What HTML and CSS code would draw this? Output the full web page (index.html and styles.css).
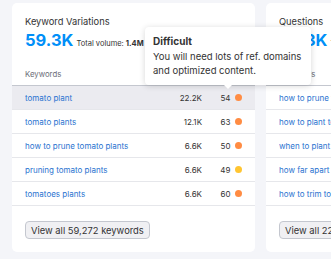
FILE: index.html
```html
<!DOCTYPE html>
<html lang="en">
<head>
    <meta charset="UTF-8">
    <title>Keyword Magic</title>
    <link rel="stylesheet" href="styles.css">
</head>
<body>
<div class="board">
    <div class="card">
        <div class="card-title">Keyword Variations</div>
        <div class="summary">
            <span class="big">59.3K</span>
            <span class="total">Total volume: <b>1.4M</b></span>
        </div>
        <div class="head">Keywords</div>
        <ul class="rows">
            <li class="row hover"><span class="kw">tomato plant</span><span class="vol">22.2K</span><span class="kd">54<i class="dot orange"></i></span></li>
            <li class="row"><span class="kw">tomato plants</span><span class="vol">12.1K</span><span class="kd">63<i class="dot orange"></i></span></li>
            <li class="row"><span class="kw">how to prune tomato plants</span><span class="vol">6.6K</span><span class="kd">50<i class="dot orange"></i></span></li>
            <li class="row"><span class="kw">pruning tomato plants</span><span class="vol">6.6K</span><span class="kd">49<i class="dot yellow"></i></span></li>
            <li class="row"><span class="kw">tomatoes plants</span><span class="vol">6.6K</span><span class="kd">60<i class="dot orange"></i></span></li>
        </ul>
        <button class="view-all">View all 59,272 keywords</button>
    </div>
    <div class="card">
        <div class="card-title">Questions</div>
        <div class="summary">
            <span class="big">22.3K</span>
            <span class="total">Total volume: <b>95.1K</b></span>
        </div>
        <div class="head">Keywords</div>
        <ul class="rows">
            <li class="row"><span class="kw">how to prune tomato plants</span><span class="vol">6.6K</span><span class="kd">50<i class="dot orange"></i></span></li>
            <li class="row"><span class="kw">how to plant tomatoes</span><span class="vol">5.4K</span><span class="kd">52<i class="dot orange"></i></span></li>
            <li class="row"><span class="kw">when to plant tomatoes</span><span class="vol">4.4K</span><span class="kd">48<i class="dot yellow"></i></span></li>
            <li class="row"><span class="kw">how far apart to plant tomatoes</span><span class="vol">2.9K</span><span class="kd">41<i class="dot yellow"></i></span></li>
            <li class="row"><span class="kw">how to trim tomato plants</span><span class="vol">2.4K</span><span class="kd">45<i class="dot yellow"></i></span></li>
        </ul>
        <button class="view-all">View all 22,312 questions</button>
    </div>
</div>
<div class="tooltip">
    <div class="tip-title">Difficult</div>
    <div class="tip-text">You will need lots of ref. domains<br>and optimized content.</div>
</div>
</body>
</html>
```

FILE: styles.css
```css
*{
    margin: 0;
    padding: 0;
    box-sizing: border-box;
}
ul{
    list-style-type: none;
}
body{
    background: #f4f5f9;
    font-family: Inter, "Noto Sans", sans-serif;
    color: #333;
    overflow: hidden;
    padding: 3px 0 0 12px;
}
.board{
    display: flex;
    gap: 11px;
    width: 600px;
}
.card{
    width: 243px;
    flex: none;
    background: #fff;
    border-radius: 5px;
    padding: 13px 0 13px;
}
.card-title{
    font-size: 9.3px;
    line-height: 12px;
    padding: 0 13px;
    color: #333;
}
.summary{
    display: flex;
    align-items: baseline;
    gap: 3px;
    padding: 0 13px;
    margin-top: 2px;
    white-space: nowrap;
}
.big{
    font-size: 16.5px;
    line-height: 20px;
    font-weight: 700;
    color: #008ff8;
}
.total{
    font-size: 7.5px;
    color: #333;
}
.head{
    font-size: 7.8px;
    line-height: 12px;
    color: #6c6e79;
    padding: 18px 13px 5px;
    border-bottom: 1px solid #c4c7cf;
}
.row{
    display: flex;
    align-items: center;
    height: 24px;
    padding: 0 13px;
    border-bottom: 1px solid #e6e7eb;
    font-size: 8px;
}
.row.hover{
    background: #ebebf0;
}
.kw{
    flex: 1;
    color: #2a73d0;
    white-space: nowrap;
    overflow: hidden;
}
.vol{
    width: 40px;
    text-align: right;
    color: #333;
}
.kd{
    width: 40px;
    display: flex;
    align-items: center;
    justify-content: flex-end;
    gap: 4px;
    color: #333;
}
.dot{
    width: 7.5px;
    height: 7.5px;
    border-radius: 50%;
}
.dot.orange{
    background: #ff8c43;
}
.dot.yellow{
    background: #ffc531;
}
.view-all{
    margin: 15px 0 0 13px;
    height: 18px;
    padding: 0 5px;
    font-family: Inter, "Noto Sans", sans-serif;
    font-size: 9.4px;
    color: #333;
    background: #f0f0f3;
    border: 1px solid #c4c7cf;
    border-radius: 4px;
    white-space: nowrap;
}
.tooltip{
    position: absolute;
    left: 145px;
    top: 27px;
    width: 166px;
    height: 58px;
    padding: 7px 8px 7px;
    background: #fff;
    border-radius: 4px;
    box-shadow: 0 1px 6px rgba(0, 0, 0, 0.16);
}
.tooltip:after{
    content: "";
    position: absolute;
    left: 79px;
    bottom: -4px;
    border-left: 4px solid transparent;
    border-right: 4px solid transparent;
    border-top: 4px solid #fff;
}
.tip-title{
    font-size: 10px;
    line-height: 14px;
    font-weight: 700;
    margin-bottom: 2px;
}
.tip-text{
    font-size: 9.5px;
    line-height: 14px;
    color: #333;
    white-space: nowrap;
}
```
